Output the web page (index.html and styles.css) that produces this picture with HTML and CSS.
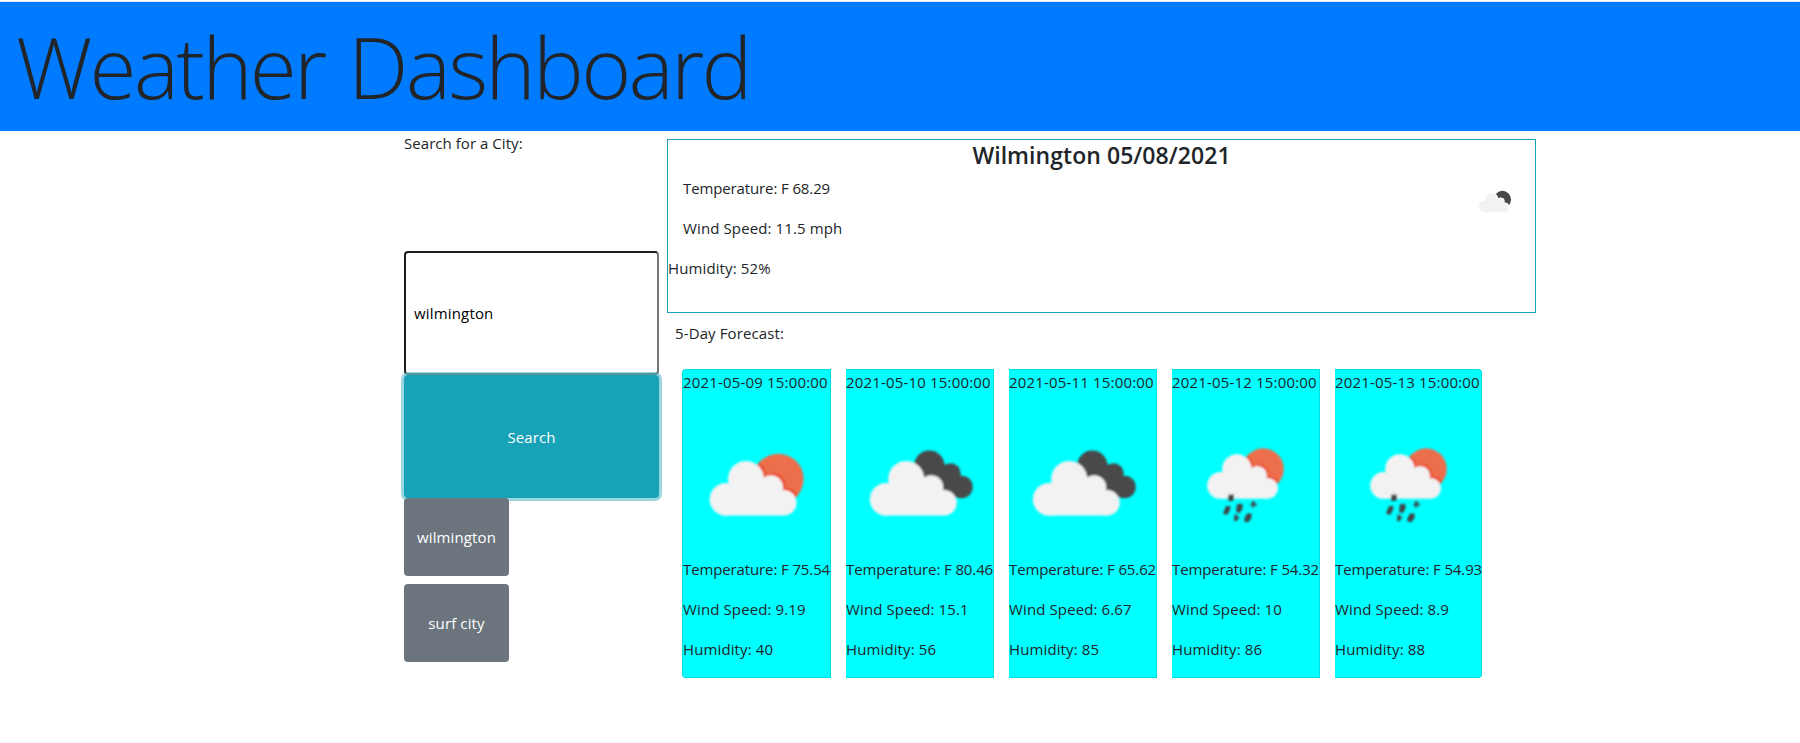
FILE: index.html
```html
<!DOCTYPE html>
<html lang="en">
<head>
<meta charset="utf-8">
<title>Weather Dashboard</title>
<link rel="stylesheet" href="styles.css">
</head>
<body>
<svg class="defs" width="0" height="0" aria-hidden="true">
  <defs>
    <filter id="soft"><feGaussianBlur stdDeviation="0.8"/></filter>
    <g id="cloud">
      <circle cx="63" cy="69" r="18"/>
      <circle cx="43" cy="89.3" r="16.4"/>
      <circle cx="88" cy="77.3" r="12"/>
      <circle cx="100.8" cy="92.8" r="12.8"/>
      <path d="M43 75H90L101 85V105.6H43Z"/>
    </g>
    <clipPath id="sun-clip"><circle cx="95.3" cy="69" r="25.3"/></clipPath>
    <g id="sun">
      <circle cx="95.3" cy="69" r="25.3" fill="#ec6e4c"/>
      <g clip-path="url(#sun-clip)" fill="#ea4425"><use href="#cloud" x="2" y="-2"/></g>
    </g>
    <symbol id="partly" viewBox="0 0 147 147">
      <g filter="url(#soft)"><use href="#sun"/><use href="#cloud" fill="#f2f2f2"/></g>
    </symbol>
    <symbol id="night" viewBox="0 0 147 147">
      <circle cx="95.3" cy="69" r="25.3" fill="#48484a"/>
      <use href="#cloud" x="2" y="-2" fill="#fff"/>
      <use href="#cloud" fill="#f2f2f2"/>
    </symbol>
    <symbol id="broken" viewBox="0 0 147 147">
      <g filter="url(#soft)">
        <g fill="#48484a">
          <circle cx="83.3" cy="55.8" r="15.2"/><circle cx="104.7" cy="63.2" r="10"/><circle cx="115.5" cy="77" r="11.2"/>
          <path d="M83 50L104 56L118 74L112 88L78 76Z"/>
        </g>
        <use href="#cloud" x="-2.8" y="0" fill="#f2f2f2"/>
      </g>
    </symbol>
    <symbol id="rain" viewBox="0 0 147 147">
      <g filter="url(#soft)">
        <g transform="translate(13.5 2.7) scale(.815)"><use href="#sun"/><use href="#cloud" fill="#f2f2f2"/></g>
        <g fill="#404446">
          <path d="M56.500 84.500h5.500v5l-1.500 1.500h-4.500v-4Z"/>
          <path d="M54 96h4.500l-.5 4-3 5-4-1.500Z"/>
          <path d="M65 94h5.500v4.500l-3 5-3.500-2Z"/>
          <path d="M80 91h2.500v2.500h2.500v2h-2.500l-1.500 3-1.500-3-2-.5 2.500-1.500Z"/>
          <path d="M62.500 104.500h2.500v2h2.500l-1 2-2.500 3-2-.5Z"/>
          <path d="M75 103.500h4.500v4.500l-3 4h-4v-4Z"/>
        </g>
      </g>
    </symbol>
  </defs>
</svg>

<header class="banner"><h1 class="banner-title">Weather Dashboard</h1></header>

<main class="layout">
  <section class="search">
    <label class="search-label" for="city">Search for a City:</label>
    <input class="search-input" id="city" type="text" value="wilmington">
    <button class="search-button">Search</button>
    <div class="history">
      <button class="history-button">wilmington</button>
      <button class="history-button">surf city</button>
    </div>
  </section>

  <section class="weather">
    <article class="current">
      <h2 class="current-title">Wilmington 05/08/2021</h2>
      <div class="current-row">
        <div class="current-main">
          <p class="temp">Temperature: F 68.29</p>
          <p>Wind Speed: 11.5 mph</p>
        </div>
        <svg class="current-icon"><use href="#night"/></svg>
      </div>
      <p>Humidity: 52%</p>
    </article>
    <p class="forecast-label">5-Day Forecast:</p>
    <div class="forecast">
      <article class="day">
        <p class="date">2021-05-09 15:00:00</p>
        <svg class="day-icon"><use href="#partly"/></svg>
        <p class="temp">Temperature: F 75.54</p>
        <p>Wind Speed: 9.19</p>
        <p>Humidity: 40</p>
      </article>
      <article class="day">
        <p class="date">2021-05-10 15:00:00</p>
        <svg class="day-icon"><use href="#broken"/></svg>
        <p class="temp">Temperature: F 80.46</p>
        <p>Wind Speed: 15.1</p>
        <p>Humidity: 56</p>
      </article>
      <article class="day">
        <p class="date">2021-05-11 15:00:00</p>
        <svg class="day-icon"><use href="#broken"/></svg>
        <p class="temp">Temperature: F 65.62</p>
        <p>Wind Speed: 6.67</p>
        <p>Humidity: 85</p>
      </article>
      <article class="day">
        <p class="date">2021-05-12 15:00:00</p>
        <svg class="day-icon"><use href="#rain"/></svg>
        <p class="temp">Temperature: F 54.32</p>
        <p>Wind Speed: 10</p>
        <p>Humidity: 86</p>
      </article>
      <article class="day">
        <p class="date">2021-05-13 15:00:00</p>
        <svg class="day-icon"><use href="#rain"/></svg>
        <p class="temp">Temperature: F 54.93</p>
        <p>Wind Speed: 8.9</p>
        <p>Humidity: 88</p>
      </article>
    </div>
  </section>
</main>
</body>
</html>
```
FILE: styles.css
```css
* { box-sizing: border-box; }
body {
  margin: 0;
  background: #fff;
  color: #212529;
  font-family: "Open Sans", "Noto Sans", sans-serif;
  font-size: 15px;
  line-height: 24px;
  letter-spacing: .12px;
  white-space: nowrap;
}
h1, h2, p { margin: 0; }
.defs { display: block; width: 0; height: 0; }
.banner {
  height: 131px;
  padding: 12px 16px 0;
  background: #007bff;
  border-top: 1px solid #fff;
  box-shadow: inset 0 1px #e4e8ec;
}
.banner-title {
  font-size: 85.5px;
  font-weight: 300;
  line-height: 106px;
  letter-spacing: -2.75px;
  word-spacing: 4px;
}
.layout { display: flex; margin-left: 404px; }
.search { display: flex; flex-direction: column; width: 255px; }
.search-label { height: 120px; letter-spacing: .05px; }
.search-input {
  height: 124px;
  padding: 1px 8px;
  border: 2px solid;
  border-color: #1e1e1f #767676 #767676 #1e1e1f;
  border-radius: 4px;
  font: inherit;
  letter-spacing: .17px;
  color: #000;
}
.search-button, .history-button {
  border: 0;
  border-radius: 4px;
  color: #fff;
  font: inherit;
  letter-spacing: .12px;
}
.search-button {
  position: relative;
  height: 123px;
  padding: 0;
  background: #17a2b8;
  box-shadow: 0 0 0 3px rgba(58, 176, 195, .5);
}
.history { position: relative; display: flex; flex-direction: column; gap: 8px; width: 105px; }
.history-button { height: 78px; padding: 0; background: #6c757d; }
.weather { margin-left: 8px; padding-top: 8px; width: 869px; }
.current { height: 174px; border: 1px solid #17a2b8; }
.current-title {
  height: 36px;
  font-size: 23px;
  font-weight: 600;
  line-height: 31px;
  letter-spacing: .05px;
  text-align: center;
}
.current-row { display: flex; justify-content: space-between; padding: 0 15px; height: 80px; }
.current-main { display: flex; flex-direction: column; gap: 16px; }
.current-icon { width: 50px; height: 50px; }
.temp { letter-spacing: -.12px; }
.date { letter-spacing: .17px; }
.forecast-label { padding: 8px 8px 0; height: 56px; }
.forecast { display: flex; gap: 15px; padding-left: 15px; }
.day {
  width: 148px;
  height: 309px;
  border: 1px solid rgba(0, 0, 0, .125);
  border-left: 0;
  background: #0ff;
}
.day:first-child { width: 149px; border-left: 1px solid rgba(0, 0, 0, .125); border-radius: 4px 0 0 4px; }
.day:last-child { width: 147px; border-radius: 0 4px 4px 0; }
.day p { height: 40px; }
.day-icon { display: block; width: 147px; height: 147px; }
```
